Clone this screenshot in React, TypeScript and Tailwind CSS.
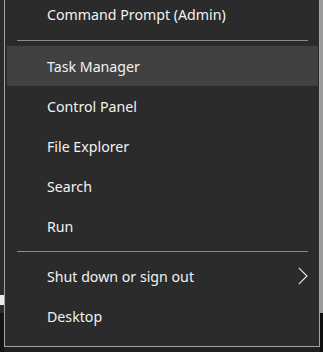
import React from 'react';

// Win+X power user menu (dark)
interface MenuItem {
  label: string;
  active?: boolean;
  submenu?: boolean;
}

const topItems: MenuItem[] = [
  { label: 'Task Manager', active: true },
  { label: 'Control Panel' },
  { label: 'File Explorer' },
  { label: 'Search' },
  { label: 'Run' },
];

const bottomItems: MenuItem[] = [
  { label: 'Shut down or sign out', submenu: true },
  { label: 'Desktop' },
];

const Chevron: React.FC = () => (
  <svg width="10" height="18" viewBox="0 0 10 18" fill="none" className="shrink-0">
    <polyline points="0.8,0.8 9,9 0.8,17.2" stroke="#f0f0f0" strokeWidth="1.1" />
  </svg>
);

const Row: React.FC<{ item: MenuItem }> = ({ item }) => (
  <div
    className={`ml-[2px] mr-[1px] h-[40px] flex items-center justify-between pl-[40px] pr-[10px] ${
      item.active ? 'bg-[#414141]' : ''
    }`}
  >
    <span className="pt-[2px]">{item.label}</span>
    {item.submenu && <Chevron />}
  </div>
);

const Separator: React.FC<{ className?: string }> = ({ className }) => (
  <div className={`ml-[12px] mr-[11px] h-px bg-[#8a8a8a] ${className ?? ''}`} />
);

export default function App() {
  return (
    <div
      className="w-[323px] h-[352px] overflow-hidden flex bg-[#1c1c1c] text-[#f2f2f2] text-[14.2px] leading-none"
      style={{ fontFamily: '"Noto Sans", "Segoe UI", sans-serif' }}
    >
      {/* desktop peeking out on the left */}
      <div className="w-[4px] flex flex-col bg-[#2b2b2b]">
        <div className="h-[295px]" />
        <div className="h-[10px] bg-[#e9e9e9]" />
        <div className="h-[8px]" />
        <div className="flex-1 bg-[#141414]" />
      </div>

      <div className="w-[316px] flex flex-col">
        <div className="h-[347px] bg-[#2b2b2b] border-l border-r border-b border-[#a3a3a3] flex flex-col">
          <div className="h-[29px] flex items-center pl-[42px] pt-[2px]">Command Prompt (Admin)</div>
          <Separator className="mt-[11px] mb-[5px]" />
          {topItems.map(item => (
            <Row key={item.label} item={item} />
          ))}
          <Separator className="mt-[5px] mb-[4px]" />
          {bottomItems.map(item => (
            <Row key={item.label} item={item} />
          ))}
        </div>
        <div className="flex-1 bg-[#202020]" />
      </div>

      <div className="w-[3px] flex flex-col">
        <div className="h-[313px] bg-[#9a9a9a]" />
        <div className="flex-1 bg-[#0f0f0f]" />
      </div>
    </div>
  );
}
